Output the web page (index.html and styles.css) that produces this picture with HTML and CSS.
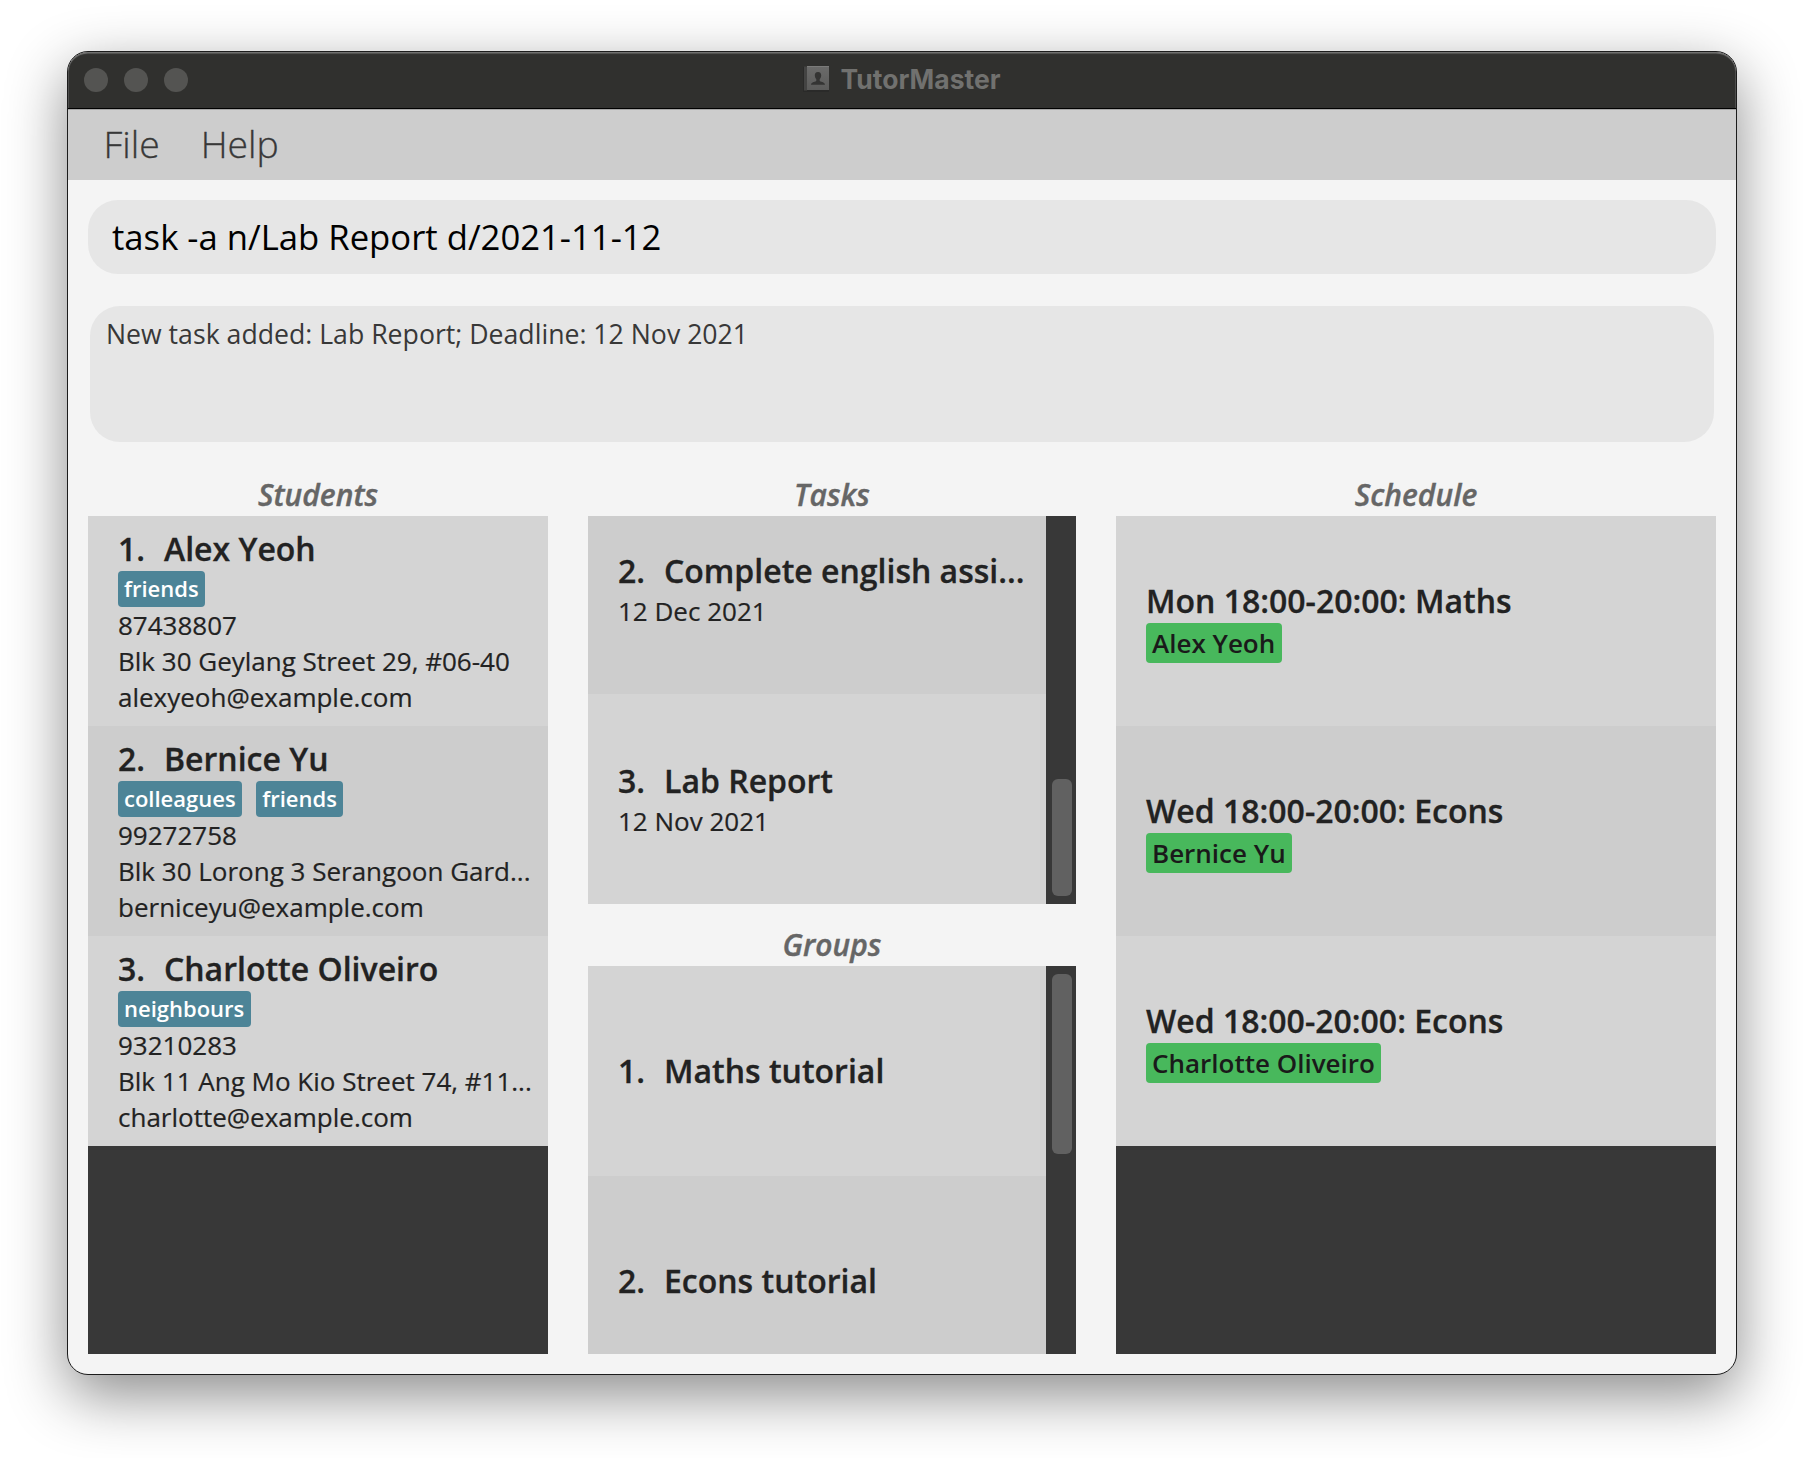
FILE: index.html
```html
<!DOCTYPE html>
<html lang="en">
<head>
<meta charset="utf-8">
<title>TutorMaster</title>
<link rel="stylesheet" href="styles.css">
</head>
<body>
<div class="window">
  <header class="titlebar">
    <div class="lights"><i class="light"></i><i class="light"></i><i class="light"></i></div>
    <div class="app-title">
      <svg class="app-icon" width="26" height="26" viewBox="0 0 26 26">
        <defs><linearGradient id="cover" x1="0" y1="0" x2="0" y2="1"><stop offset="0" stop-color="#6b6b6a"/><stop offset="1" stop-color="#5b5b5a"/></linearGradient></defs>
        <rect x="0" y="1" width="26" height="25" fill="#2a2a29"/>
        <rect x="1" y="0.5" width="3" height="24" fill="#444443"/>
        <rect x="4" y="0" width="22" height="24" fill="url(#cover)"/>
        <rect x="4" y="0" width="22" height="1" fill="#7b7b7a"/>
        <path d="M15 6c2.300 0 3.300 1.500 3.200 3.600-.1 1.700-.8 2.800-1.500 3.600v1.600c.3 1.200 5.100 1.100 5.300 4H8c.2-2.900 5-2.800 5.300-4v-1.600c-.7-.8-1.400-1.900-1.500-3.600C11.700 7.500 12.700 6 15 6z" fill="#343433"/>
      </svg>
      <span>TutorMaster</span>
    </div>
  </header>
  <nav class="menubar"><span>File</span><span>Help</span></nav>
  <div class="command">task -a n/Lab Report d/2021-11-12</div>
  <div class="result">New task added: Lab Report; Deadline: 12 Nov 2021</div>
  <main class="panels">
    <section class="column">
      <h2 class="heading">Students</h2>
      <div class="list">
        <div class="row person">
          <div class="name"><span class="num">1.</span>Alex Yeoh</div>
          <div class="tags"><span class="tag">friends</span></div>
          <div class="line">87438807</div>
          <div class="line">Blk 30 Geylang Street 29, #06-40</div>
          <div class="line">alexyeoh@example.com</div>
        </div>
        <div class="row person alt">
          <div class="name"><span class="num">2.</span>Bernice Yu</div>
          <div class="tags"><span class="tag">colleagues</span><span class="tag">friends</span></div>
          <div class="line">99272758</div>
          <div class="line">Blk 30 Lorong 3 Serangoon Gard...</div>
          <div class="line">berniceyu@example.com</div>
        </div>
        <div class="row person">
          <div class="name"><span class="num">3.</span>Charlotte Oliveiro</div>
          <div class="tags"><span class="tag">neighbours</span></div>
          <div class="line">93210283</div>
          <div class="line">Blk 11 Ang Mo Kio Street 74, #11...</div>
          <div class="line">charlotte@example.com</div>
        </div>
      </div>
    </section>
    <section class="column">
      <h2 class="heading">Tasks</h2>
      <div class="list scrolling tasks">
        <div class="rows to-end">
          <div class="row alt">
            <div class="name"><span class="num">2.</span>Complete english assi...</div>
            <div class="line">12 Dec 2021</div>
          </div>
          <div class="row">
            <div class="name"><span class="num">3.</span>Lab Report</div>
            <div class="line">12 Nov 2021</div>
          </div>
        </div>
        <div class="track at-end"><div class="thumb task-thumb"></div></div>
      </div>
      <h2 class="heading groups-heading">Groups</h2>
      <div class="list scrolling">
        <div class="rows">
          <div class="row"><div class="name"><span class="num">1.</span>Maths tutorial</div></div>
          <div class="row alt"><div class="name"><span class="num">2.</span>Econs tutorial</div></div>
        </div>
        <div class="track"><div class="thumb group-thumb"></div></div>
      </div>
    </section>
    <section class="column">
      <h2 class="heading">Schedule</h2>
      <div class="list">
        <div class="row">
          <div class="name">Mon 18:00-20:00: Maths</div>
          <div class="tags"><span class="student">Alex Yeoh</span></div>
        </div>
        <div class="row alt">
          <div class="name">Wed 18:00-20:00: Econs</div>
          <div class="tags"><span class="student">Bernice Yu</span></div>
        </div>
        <div class="row">
          <div class="name">Wed 18:00-20:00: Econs</div>
          <div class="tags"><span class="student">Charlotte Oliveiro</span></div>
        </div>
      </div>
    </section>
  </main>
</div>
</body>
</html>
```
FILE: styles.css
```css
* { box-sizing: border-box; }

body {
  margin: 0;
  height: 1458px;
  padding: 51px 67px 0;
  overflow: hidden;
  background: #fff;
  font-family: "Open Sans", "Noto Sans", sans-serif;
  color: #222;
}

.window {
  width: 1670px;
  height: 1324px;
  display: flex;
  flex-direction: column;
  overflow: hidden;
  border: 1px solid #1c1c1c;
  border-radius: 21px;
  background: #f4f4f4;
  box-shadow: 0 20px 60px rgba(0, 0, 0, 0.46);
}

.titlebar {
  flex: none;
  height: 57px;
  display: grid;
  grid-template-columns: 1fr auto 1fr;
  background: #30302e;
  border-bottom: 1px solid #000;
  border-radius: 20px 20px 0 0;
  box-shadow: inset 0 2px 1px -0.5px #747473, inset 1px 0 0 #4c4c4b, inset -1px 0 0 #4c4c4b;
}

.lights {
  display: flex;
  gap: 16px;
  padding: 16px 0 0 16px;
}

.light {
  width: 24px;
  height: 24px;
  border-radius: 50%;
  background: #545452;
}

.app-title {
  display: flex;
  gap: 11px;
  padding-top: 10px;
  font: bold 26.5px/34px Inter, sans-serif;
  color: #71716f;
}

.app-icon { margin-top: 4px; }

.menubar {
  flex: none;
  height: 71px;
  display: flex;
  gap: 41px;
  padding-left: 35.5px;
  border-top: 1px solid #a5a5a5;
  background: #cdcdcd;
  font-size: 37.33px;
  font-weight: 300;
  line-height: 67px;
  color: #383838;
  -webkit-text-stroke: 0.3px #383838;
}

.command {
  flex: none;
  height: 74px;
  margin: 20px 20px 0;
  padding-left: 24px;
  border-radius: 30px;
  background: #e6e6e6;
  font-size: 34.67px;
  line-height: 73px;
  color: #000;
}

.result {
  flex: none;
  height: 136px;
  margin: 32px 22px 0;
  padding: 10px 16px;
  border-radius: 30px;
  background: #e6e6e6;
  font-size: 26.67px;
  line-height: 36px;
  color: #383838;
}

.panels {
  flex: 1;
  min-height: 0;
  display: grid;
  grid-template-columns: 460px 488px 600px;
  gap: 40px;
  padding: 32px 20px 20px;
}

.column {
  min-height: 0;
  display: flex;
  flex-direction: column;
}

.heading {
  flex: none;
  height: 42px;
  margin: 0;
  font-size: 30px;
  font-weight: 600;
  font-style: italic;
  line-height: 42px;
  text-align: center;
  color: #666;
  -webkit-text-stroke: 0.4px #666;
}

.groups-heading { margin-top: 20px; }

.list {
  flex: 1;
  min-height: 0;
  background: #383838;
  overflow: hidden;
}

.tasks { flex: none; height: 388px; }

.scrolling { display: flex; }

.rows {
  flex: 1;
  display: flex;
  flex-direction: column;
}

.to-end { justify-content: flex-end; }

.row {
  flex: none;
  height: 210px;
  display: flex;
  flex-direction: column;
  justify-content: center;
  padding-left: 30px;
  background: #d4d4d4;
  white-space: nowrap;
}

.person {
  justify-content: flex-start;
  padding-top: 11px;
}

.alt { background: #cdcdcd; }

.name {
  display: flex;
  font-size: 32px;
  font-weight: 600;
  line-height: 44px;
  -webkit-text-stroke: 0.3px #222;
}

.num { width: 46px; }

.line {
  font-size: 26px;
  line-height: 36px;
  -webkit-text-stroke: 0.2px #222;
}

.tags {
  display: flex;
  gap: 14px;
}

.tag {
  height: 36px;
  padding: 0 6.6px 0 6px;
  border-radius: 4px;
  background: #4d8497;
  font-size: 22px;
  font-weight: 600;
  line-height: 34px;
  color: #fff;
}

.student {
  height: 40px;
  padding: 0 6.3px 0 6px;
  border-radius: 4px;
  background: #48b85c;
  font-size: 26px;
  font-weight: 600;
  line-height: 40px;
  color: #1a1a1a;
}

.track {
  flex: none;
  width: 30px;
  display: flex;
  flex-direction: column;
  padding: 8px 4px 8px 6px;
}

.at-end { justify-content: flex-end; }

.thumb {
  border-radius: 6px;
  background: #616161;
}

.task-thumb { height: 117px; }

.group-thumb { height: 180px; }
```
